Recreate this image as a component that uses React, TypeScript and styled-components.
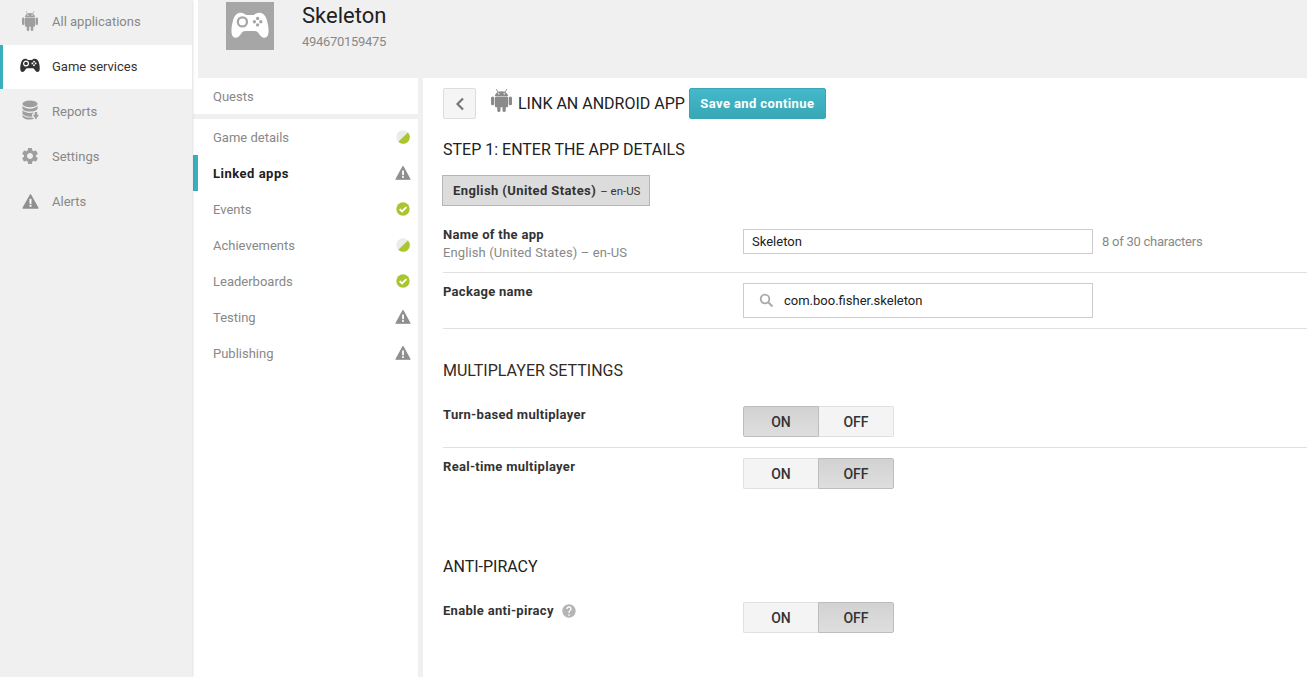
import { createGlobalStyle, styled } from "styled-components";
import { MdSettings, MdHelp } from "react-icons/md";

const GlobalStyle = createGlobalStyle`
  html, body { margin: 0; padding: 0; height: 100%; overflow: hidden; background: #fff; }
  body { font-family: Roboto, "Liberation Sans", Arial, sans-serif; color: #212121; }
  #root { height: 100%; }
`;

function AndroidIcon({ width = 16, height = 20, color = "#9e9e9e" }: { width?: number; height?: number; color?: string }) {
  return (
    <svg width={width} height={height} viewBox="1.6 1 16.8 19" preserveAspectRatio="none" fill={color}>
      <path d="M5.9 1l1.6 2.3A6 6 0 0 1 10 2.8c.9 0 1.8.2 2.5.5L14.1 1l.5.3-1.5 2.3c1.3.8 2.100 1.900 2.200 3.200H4.700c.1-1.300.9-2.400 2.200-3.200L5.400 1.300z" />
      <rect x="4.7" y="7.2" width="10.6" height="8.8" rx="1" />
      <rect x="1.6" y="7.2" width="2.6" height="7.200" rx="1.300" />
      <rect x="15.8" y="7.2" width="2.6" height="7.200" rx="1.300" />
      <rect x="6.600" y="15" width="2.600" height="5" rx="1.300" />
      <rect x="10.800" y="15" width="2.600" height="5" rx="1.300" />
      <circle cx="7.8" cy="5" r=".6" fill="#fff" />
      <circle cx="12.2" cy="5" r=".6" fill="#fff" />
    </svg>
  );
}

function GamepadIcon({ width, color, hole }: { width: number; color: string; hole: string }) {
  return (
    <svg width={width} height={width * 0.72} viewBox="0 0 50 36">
      <path
        fill={color}
        d="M13 1c3 0 5 1.5 7 3h10c2-1.500 4-3 7-3 5 0 8 3 10 9 2 7 3 14 2 19-.5 3-2.500 5-5 5-3 0-5-2-7-5-1.500-2.500-3-4-6-4H19c-3 0-4.500 1.500-6 4-2 3-4 5-7 5-2.500 0-4.500-2-5-5-1-5 0-12 2-19C5 4 8 1 13 1z"
      />
      <circle cx="15" cy="13" r="6" fill="none" stroke={hole} strokeWidth="3" />
      <circle cx="35" cy="8.500" r="2.200" fill={hole} />
      <circle cx="35" cy="17" r="2.200" fill={hole} />
      <circle cx="30.800" cy="12.800" r="2.200" fill={hole} />
      <circle cx="39.200" cy="12.800" r="2.200" fill={hole} />
    </svg>
  );
}

function DatabaseIcon() {
  return (
    <svg width="17" height="22" viewBox="0 0 18 22" fill="#9e9e9e">
      <ellipse cx="8.500" cy="3.500" rx="8" ry="3.500" />
      <path d="M.5 5.500c1 2 4.500 3 8 3s7-1 8-3v3c-1 2-4.500 3-8 3s-7-1-8-3z" />
      <path d="M.5 10c1 2 4.500 3 8 3 1.200 0 2.400-.1 3.500-.4V14h-1.500l.4 2.800c-.8.100-1.600.2-2.400.2-3.500 0-7-1-8-3z" />
      <path d="M.5 15c1 2 4.500 3 8 3h2.800l1.400 1.600c-1.300.3-2.800.4-4.200.4-3.500 0-7-1-8-3z" />
      <path d="M13.500 12H16v3h2l-3.300 5-3.200-5h2z" />
    </svg>
  );
}

function AlertIcon({ size = 16 }: { size?: number }) {
  return (
    <svg width={size} height={size} viewBox="0 0 16 16">
      <path
        fill="#8f8f8f"
        stroke="#8f8f8f"
        strokeWidth="1.200"
        strokeLinejoin="round"
        d="M8 1.600L15 14.200H1z"
      />
      <rect x="7.100" y="5.500" width="1.800" height="4.700" fill="#fff" />
      <rect x="7.100" y="11.100" width="1.800" height="1.800" fill="#fff" />
    </svg>
  );
}

type StatusKind = "done" | "partial" | "alert";

function StatusIcon({ kind }: { kind: StatusKind }) {
  if (kind === "alert") return <AlertIcon />;
  if (kind === "done") {
    return (
      <svg width="14" height="14" viewBox="0 0 14 14">
        <circle cx="7" cy="7" r="6.700" fill="#a9c52f" />
        <path d="M3.700 7.200l2.300 2.300 4.400-4.400" fill="none" stroke="#fff" strokeWidth="1.900" />
      </svg>
    );
  }
  return (
    <svg width="14" height="14" viewBox="0 0 14 14">
      <circle cx="7" cy="7" r="6.700" fill="#ebebeb" />
      <path d="M11.900 2.400A6.700 6.700 0 0 1 2.300 11.800z" fill="#a9c52f" />
    </svg>
  );
}

const navItems = [
  { label: "All applications", icon: <AndroidIcon /> },
  { label: "Game services", icon: <GamepadIcon width={21} color="#333" hole="#fff" />, active: true },
  { label: "Reports", icon: <DatabaseIcon /> },
  { label: "Settings", icon: <MdSettings size={22} color="#9e9e9e" /> },
  { label: "Alerts", icon: <AlertIcon size={17} /> },
];

const subItems: { label: string; status: StatusKind; active?: boolean }[] = [
  { label: "Game details", status: "partial" },
  { label: "Linked apps", status: "alert", active: true },
  { label: "Events", status: "done" },
  { label: "Achievements", status: "partial" },
  { label: "Leaderboards", status: "done" },
  { label: "Testing", status: "alert" },
  { label: "Publishing", status: "alert" },
];

function Toggle({ on }: { on: boolean }) {
  return (
    <ToggleGroup>
      <ToggleSide $selected={on} $side="left">ON</ToggleSide>
      <ToggleSide $selected={!on} $side="right">OFF</ToggleSide>
    </ToggleGroup>
  );
}

export default function App() {
  return (
    <Page>
      <GlobalStyle />
      <Sidebar>
        {navItems.map((item) => (
          <NavItem key={item.label} $active={item.active}>
            <NavIcon>{item.icon}</NavIcon>
            {item.label}
          </NavItem>
        ))}
      </Sidebar>
      <Content>
        <Header>
          <GameTile>
            <GamepadIcon width={38} color="#fff" hole="#a6a6a6" />
          </GameTile>
          <GameInfo>
            <GameName>Skeleton</GameName>
            <GameId>494670159475</GameId>
          </GameInfo>
        </Header>
        <Body>
          <SubColumn>
            <QuestsPanel>Quests</QuestsPanel>
            <SubPanel>
              {subItems.map((item) => (
                <SubItem key={item.label} $active={item.active}>
                  {item.label}
                  <StatusSlot>
                    <StatusIcon kind={item.status} />
                  </StatusSlot>
                </SubItem>
              ))}
            </SubPanel>
          </SubColumn>
          <Main>
            <TitleBar>
              <BackButton>
                <svg width="10" height="14" viewBox="0 0 10 14">
                  <path d="M8 1.500L2.500 7 8 12.500" fill="none" stroke="#777" strokeWidth="2.200" />
                </svg>
              </BackButton>
              <TitleIcon>
                <AndroidIcon width={21} height={23} color="#8a8a8a" />
              </TitleIcon>
              <PageTitle>Link an Android app</PageTitle>
              <SaveButton>Save and continue</SaveButton>
            </TitleBar>
            <StepHeading>Step 1: Enter the app details</StepHeading>
            <LangChip>
              English (United States) <small>– en-US</small>
            </LangChip>
            <NameRow>
              <LabelCell>
                <Label>Name of the app</Label>
                <SubLabel>English (United States) – en-US</SubLabel>
              </LabelCell>
              <NameInput>Skeleton</NameInput>
              <Counter>8 of 30 characters</Counter>
            </NameRow>
            <PackageRow>
              <div>
                <Label>Package name</Label>
              </div>
              <PackageInput>
                <svg width="15" height="15" viewBox="0 0 15 15">
                  <circle cx="6" cy="6" r="4.300" fill="none" stroke="#aaa" strokeWidth="1.800" />
                  <path d="M9.200 9.200l4.300 4.300" stroke="#aaa" strokeWidth="2" />
                </svg>
                com.boo.fisher.skeleton
              </PackageInput>
            </PackageRow>
            <MultiplayerHeading>Multiplayer settings</MultiplayerHeading>
            <ToggleRow $divider $first>
              <ToggleLabel>Turn-based multiplayer</ToggleLabel>
              <Toggle on />
            </ToggleRow>
            <ToggleRow>
              <ToggleLabel>Real-time multiplayer</ToggleLabel>
              <Toggle on={false} />
            </ToggleRow>
            <PiracyHeading>Anti-piracy</PiracyHeading>
            <ToggleRow $first>
              <ToggleLabel>
                Enable anti-piracy
                <HelpIcon>
                  <MdHelp size={16} color="#b5b5b5" />
                </HelpIcon>
              </ToggleLabel>
              <Toggle on={false} />
            </ToggleRow>
          </Main>
        </Body>
      </Content>
    </Page>
  );
}

const Page = styled.div`
  display: flex;
  width: 100%;
  height: 677px;
  overflow: hidden;
`;

const Sidebar = styled.nav`
  width: 192px;
  flex: none;
  margin-right: 1px;
  background: #f0f0f0;
  box-shadow: 1px 0 2px rgba(0, 0, 0, 0.12);
  z-index: 1;
`;

const NavItem = styled.div<{ $active?: boolean }>`
  display: flex;
  align-items: center;
  height: 44px;
  margin-bottom: 1px;
  box-sizing: border-box;
  padding-left: ${({ $active }) => ($active ? "17px" : "20px")};
  padding-bottom: 2px;
  border-left: ${({ $active }) => ($active ? "3px solid #3aaebd" : "none")};
  background: ${({ $active }) => ($active ? "#fff" : "transparent")};
  color: ${({ $active }) => ($active ? "#333" : "#888")};
  font-size: 13px;
`;

const NavIcon = styled.span`
  display: flex;
  justify-content: center;
  width: 20px;
  margin-right: 12px;
`;

const Content = styled.div`
  flex: 1;
  display: flex;
  flex-direction: column;
  min-width: 0;
`;

const Header = styled.header`
  display: flex;
  height: 78px;
  flex: none;
  margin-left: 5px;
  padding-left: 28px;
  background: #f0f0f0;
`;

const GameTile = styled.div`
  display: flex;
  align-items: center;
  justify-content: center;
  width: 48px;
  height: 48px;
  margin-top: 2px;
  background: #a6a6a6;
`;

const GameInfo = styled.div`
  margin-left: 28px;
`;

const GameName = styled.div`
  margin-top: 1px;
  font-size: 22px;
  line-height: 30px;
  color: #212121;
`;

const GameId = styled.div`
  margin-top: 2px;
  font-size: 13px;
  line-height: 18px;
  letter-spacing: -0.3px;
  color: #888;
`;

const Body = styled.div`
  flex: 1;
  display: flex;
  min-height: 0;
  background: #f0f0f0;
`;

const SubColumn = styled.aside`
  display: flex;
  flex-direction: column;
  gap: 5px;
  width: 225px;
  flex: none;
  margin-right: 5px;
`;

const QuestsPanel = styled.div`
  height: 36px;
  flex: none;
  padding-left: 20px;
  background: #fff;
  color: #888;
  font-size: 13px;
  line-height: 37px;
`;

const SubPanel = styled.div`
  flex: 1;
  background: #fff;
`;

const SubItem = styled.div<{ $active?: boolean }>`
  display: flex;
  align-items: center;
  justify-content: space-between;
  height: 36px;
  padding-left: ${({ $active }) => ($active ? "15px" : "20px")};
  padding-right: 7px;
  border-left: ${({ $active }) => ($active ? "5px solid #3aaebd" : "none")};
  color: ${({ $active }) => ($active ? "#212121" : "#888")};
  font-size: 13px;
  font-weight: ${({ $active }) => ($active ? 700 : 400)};
  letter-spacing: ${({ $active }) => ($active ? "0.5px" : "0")};
`;

const StatusSlot = styled.span`
  display: flex;
  justify-content: center;
  width: 17px;
`;

const Main = styled.main`
  flex: 1;
  min-width: 0;
  padding: 10px 0 0 20px;
  background: #fff;
`;

const TitleBar = styled.div`
  display: flex;
  align-items: center;
  height: 31px;
`;

const BackButton = styled.button`
  display: flex;
  align-items: center;
  justify-content: center;
  width: 33px;
  height: 31px;
  padding: 0;
  border: 1px solid #ddd;
  border-radius: 2px;
  background: #f5f5f5;
`;

const TitleIcon = styled.span`
  display: flex;
  margin: -6px 6px 0 15px;
`;

const PageTitle = styled.h1`
  margin: 0 4px 0 0;
  font-size: 16px;
  font-weight: 400;
  text-transform: uppercase;
  color: #212121;
`;

const SaveButton = styled.button`
  width: 137px;
  height: 31px;
  padding: 0;
  border: 1px solid #3aa5b5;
  border-radius: 2px;
  background: linear-gradient(#43b9ca, #38a7b6);
  color: #fff;
  font-family: inherit;
  font-size: 13px;
  font-weight: 700;
  letter-spacing: 0.4px;
`;

const SectionHeading = styled.h2`
  margin: 0;
  font-size: 16px;
  font-weight: 400;
  line-height: 20px;
  text-transform: uppercase;
  color: #212121;
`;

const StepHeading = styled(SectionHeading)`
  margin-top: 21px;
`;

const MultiplayerHeading = styled(SectionHeading)`
  margin-top: 32px;
  color: #33291f;
`;

const PiracyHeading = styled(SectionHeading)`
  margin-top: 57px;
`;

const LangChip = styled.div`
  display: flex;
  align-items: center;
  gap: 4px;
  width: 208px;
  height: 31px;
  box-sizing: border-box;
  margin: 15px 0 0 -1px;
  padding-left: 10px;
  border: 1px solid #b5b5b5;
  background: #dcdcdc;
  font-size: 13px;
  font-weight: 700;
  letter-spacing: 0.4px;
  color: #333;

  small {
    font-size: 11.500px;
    font-weight: 400;
    letter-spacing: 0;
  }
`;

const Row = styled.div`
  display: grid;
  grid-template-columns: 300px auto 1fr;
  border-bottom: 1px solid #e0e0e0;
`;

const NameRow = styled(Row)`
  align-items: start;
  height: 43px;
  margin-top: 23px;
`;

const PackageRow = styled(Row)`
  height: 45px;
  padding-top: 10px;
`;

const LabelCell = styled.div`
  margin-top: -3px;
`;

const Label = styled.div`
  display: flex;
  align-items: center;
  font-size: 13px;
  font-weight: 700;
  line-height: 18px;
  letter-spacing: 0.3px;
  color: #333;
`;

const ToggleLabel = styled(Label)`
  align-self: start;
`;

const SubLabel = styled.div`
  font-size: 13px;
  line-height: 18px;
  letter-spacing: 0.12px;
  color: #888;
`;

const NameInput = styled.div`
  width: 350px;
  height: 25px;
  box-sizing: border-box;
  padding-left: 8px;
  border: 1px solid #ccc;
  font-size: 13px;
  line-height: 23px;
  color: #212121;
`;

const Counter = styled.span`
  margin-left: 9px;
  font-size: 13px;
  line-height: 25px;
  letter-spacing: -0.25px;
  color: #888;
`;

const PackageInput = styled.div`
  display: flex;
  align-items: center;
  gap: 10px;
  width: 350px;
  height: 35px;
  box-sizing: border-box;
  padding-left: 15px;
  border: 1px solid #ccc;
  font-size: 13px;
  color: #212121;
`;

const ToggleRow = styled.div<{ $divider?: boolean; $first?: boolean }>`
  display: grid;
  grid-template-columns: 300px auto;
  justify-content: start;
  margin-top: ${({ $first }) => ($first ? "15px" : "0")};
  padding: 10px 0;
  border-bottom: 1px solid ${({ $divider }) => ($divider ? "#e0e0e0" : "transparent")};
`;

const ToggleGroup = styled.div`
  display: flex;
  width: 151px;
  height: 31px;
`;

const ToggleSide = styled.button<{ $selected: boolean; $side: "left" | "right" }>`
  flex: 1;
  padding: 0;
  border: 1px solid ${({ $selected }) => ($selected ? "#bdbdbd" : "#e0e0e0")};
  border-${({ $side }) => ($side === "left" ? "right" : "left")}-width: ${({ $selected }) => ($selected ? "1px" : "0")};
  border-radius: ${({ $side }) => ($side === "left" ? "2px 0 0 2px" : "0 2px 2px 0")};
  background: ${({ $selected }) => ($selected ? "linear-gradient(#d2d2d2, #dedede)" : "#f4f4f4")};
  color: #333;
  font-family: inherit;
  font-size: 14px;
  font-weight: 500;
`;

const HelpIcon = styled.span`
  display: flex;
  margin-left: 7px;
`;
